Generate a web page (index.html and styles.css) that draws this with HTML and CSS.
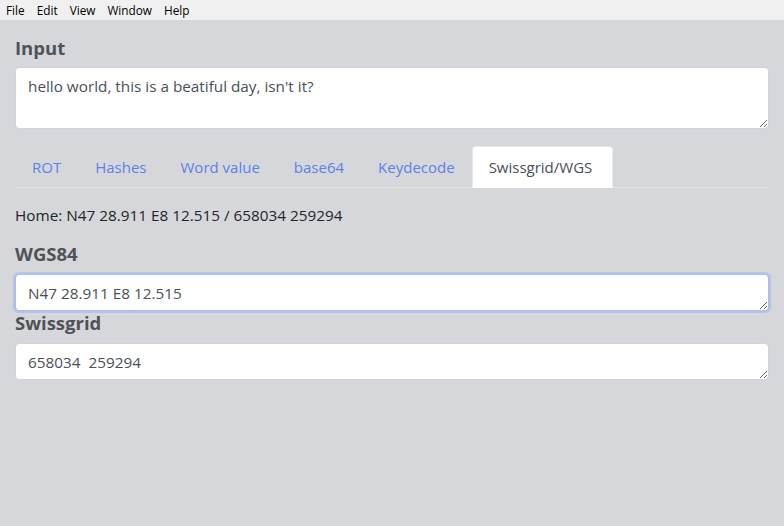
FILE: index.html
```html
<!DOCTYPE html>
<html>
<head>
<meta charset="utf-8">
<link rel="stylesheet" href="styles.css">
</head>
<body>
<div class="menubar">
  <span class="menu-item">File</span>
  <span class="menu-item">Edit</span>
  <span class="menu-item">View</span>
  <span class="menu-item">Window</span>
  <span class="menu-item">Help</span>
</div>
<main class="container">
  <h5 class="heading">Input</h5>
  <textarea class="form-control area-2" rows="2">hello world, this is a beatiful day, isn't it?</textarea>
  <ul class="nav-tabs">
    <li class="nav-link">ROT</li>
    <li class="nav-link">Hashes</li>
    <li class="nav-link">Word value</li>
    <li class="nav-link">base64</li>
    <li class="nav-link">Keydecode</li>
    <li class="nav-link active">Swissgrid/WGS</li>
  </ul>
  <p class="home">Home: N47 28.911 E8 12.515 / 658034 259294</p>
  <h5 class="heading">WGS84</h5>
  <textarea class="form-control area-1 focused" rows="1">N47 28.911 E8 12.515</textarea>
  <h5 class="heading tight">Swissgrid</h5>
  <textarea class="form-control area-1 last" rows="1">658034  259294</textarea>
</main>
</body>
</html>
```
FILE: styles.css
```css
html, body {
  margin: 0;
  padding: 0;
  height: 100%;
}
body {
  background: #d6d7db;
  font-family: "Open Sans", "Noto Sans", sans-serif;
  color: #212529;
  font-size: 15.3px;
}
.menubar {
  height: 20px;
  background: #f0f0f0;
  display: flex;
  align-items: center;
  font-size: 11.8px;
  color: #000;
}
.menu-item {
  padding: 0 6px;
}
.container {
  padding: 16px 15px 0 15px;
}
.heading {
  margin: 0 0 8px 0;
  font-size: 18.5px;
  line-height: 24px;
  font-weight: 700;
  color: #4f5357;
}
.heading.tight {
  margin-top: 0;
}
.form-control {
  display: block;
  width: 100%;
  box-sizing: border-box;
  font-family: inherit;
  font-size: 15.3px;
  line-height: 24px;
  color: #495057;
  background: #fff;
  border: 1px solid #ced4da;
  border-radius: 4px;
  padding: 6px 12px;
  margin: 0;
  resize: vertical;
  outline: none;
  overflow: hidden;
}
.area-2 { height: 62px; margin-top: -1px; }
.area-1 { height: 37px; }
.area-1.last { height: 37px; }
.focused {
  border-color: #a9bde8;
  box-shadow: 0 0 0 2px #b4c3e8;
}
.nav-tabs {
  list-style: none;
  margin: 17px 0 15px 0;
  padding: 0;
  display: flex;
  border-bottom: 1px solid #dfe1e5;
  width: 752px;
}
.nav-link {
  padding: 8px 16px;
  line-height: 24px;
  border: 1px solid transparent;
  border-top-left-radius: 4px;
  border-top-right-radius: 4px;
  margin-bottom: -1px;
  color: #5b82e8;
  font-size: 15px;
}
.nav-link.active {
  background: #fff;
  color: #495057;
  border-color: #e6e8eb #e6e8eb #fff;
  padding-right: 20px;
}
.home {
  margin: 0 0 15px 0;
  line-height: 24px;
}
```
